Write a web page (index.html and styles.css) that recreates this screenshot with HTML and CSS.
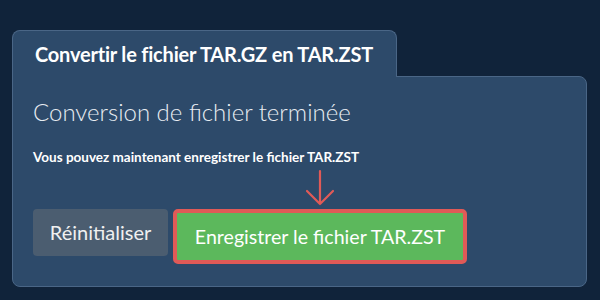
FILE: index.html
```html
<!DOCTYPE html>
<html>
<head>
        <meta charset="UTF-8">
        <title>Convertir TAR.GZ en TAR.ZST</title>
        <link rel="stylesheet" href="styles.css">
</head>
<body>
        <div id="box">
                <div class="tab">Convertir le fichier TAR.GZ en TAR.ZST</div>
                <div class="panel">
                        <h2 class="done">Conversion de fichier terminée</h2>
                        <p class="hint">Vous pouvez maintenant enregistrer le fichier TAR.ZST</p>
                        <div class="arrow">
                                <svg width="30" height="38" viewBox="0 0 30 38">
                                        <path d="M15 2 L15 35 M2 22 L15 35 L28 22" fill="none" stroke="#e05a57" stroke-width="2.2" stroke-linecap="round" stroke-linejoin="round"/>
                                </svg>
                        </div>
                        <div class="btns">
                                <span class="btn reset">Réinitialiser</span>
                                <span class="btn save">Enregistrer le fichier TAR.ZST</span>
                        </div>
                </div>
        </div>
</body>
</html>
```

FILE: styles.css
```css
*{
        margin: 0;
        padding: 0;
        box-sizing: border-box;
}
body{
        background: #10233a;
        font-family: Lato, "Liberation Sans", sans-serif;
        color: #fff;
}
#box{
        padding: 30px 13px 0 12px;
}
.tab{
        display: inline-block;
        position: relative;
        z-index: 1;
        width: 385px;
        height: 47px;
        margin-bottom: -1px;
        padding: 11px 0 0 22px;
        background: #2d4a6a;
        border: 1px solid #4a6686;
        border-bottom: none;
        border-radius: 8px 8px 0 0;
        font-size: 20px;
        font-weight: bold;
        letter-spacing: -0.2px;
}
.panel{
        background: #2d4a6a;
        border: 1px solid #4a6686;
        border-radius: 0 8px 8px 8px;
        padding: 20px 20px 20px 20px;
        height: 211px;
}
.done{
        font-size: 24px;
        font-weight: 300;
        line-height: 29px;
        color: #e8edf2;
}
.hint{
        margin-top: 22px;
        font-size: 13.5px;
        font-weight: bold;
        line-height: 18px;
}
.arrow{
        display: flex;
        justify-content: center;
        width: 294px;
        height: 40px;
        margin: 3px 0 0 140px;
}
.btns{
        display: flex;
        align-items: flex-start;
        gap: 5px;
}
.btn{
        display: block;
        height: 47px;
        line-height: 47px;
        font-size: 20px;
        border-radius: 4px;
        color: #f0f0f0;
}
.reset{
        width: 135px;
        text-align: center;
        background: #4b5d70;
}
.save{
        width: 294px;
        height: 55px;
        line-height: 48px;
        font-size: 19.6px;
        text-align: center;
        background: #5cb85c;
        border: 4px solid #e05a57;
        border-radius: 5px;
        color: #fff;
}
```
